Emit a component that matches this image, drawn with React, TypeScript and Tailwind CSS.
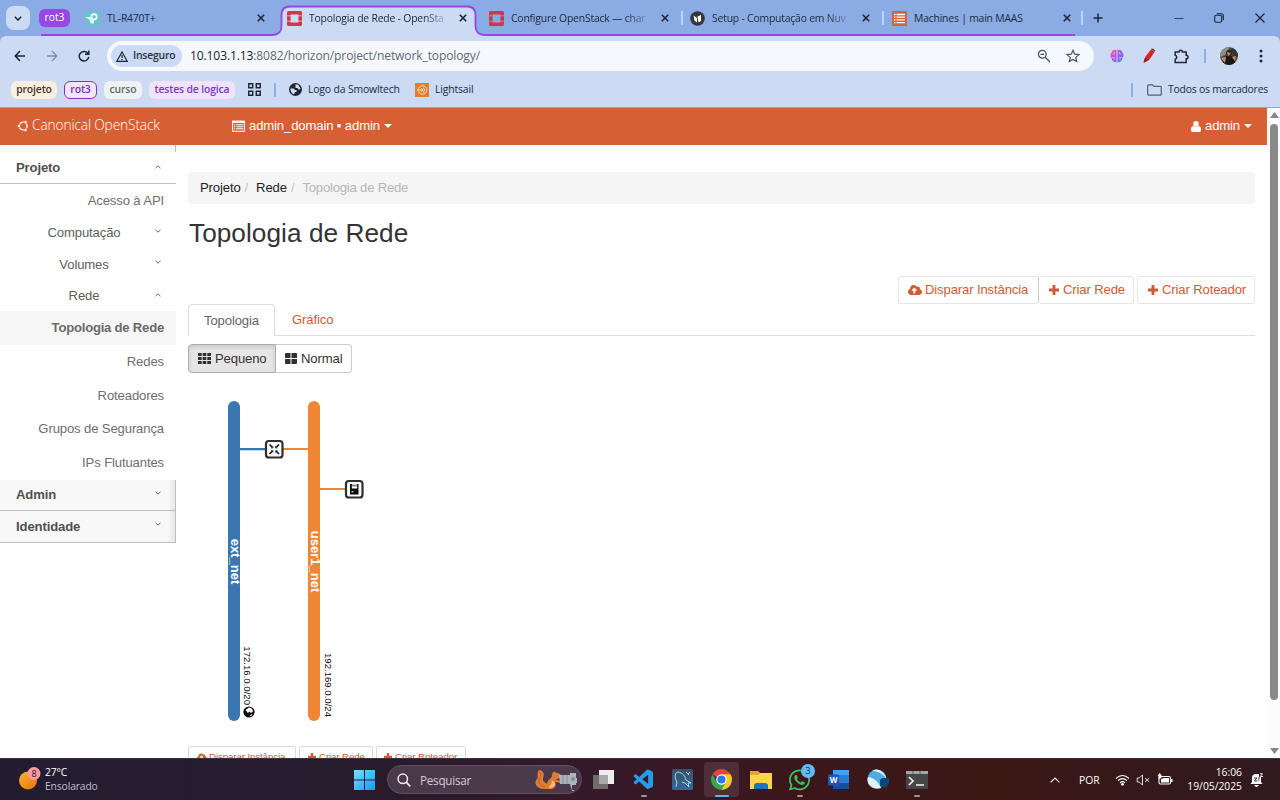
import type { ReactNode } from "react";
import { FaCloudUploadAlt, FaWhatsapp } from "react-icons/fa";
import { VscVscode } from "react-icons/vsc";

const ui = "font-['Open_Sans','Noto_Sans',sans-serif]";

function Close() {
  return (
    <svg className="block h-[8px] w-[8px] shrink-0" viewBox="0 0 8 8">
      <path d="M.8 .8 7.2 7.2M7.2 .8 .8 7.2" stroke="#20242c" strokeWidth="1.6" />
    </svg>
  );
}

function Plus({ className }: { className: string }) {
  return (
    <svg className={`shrink-0 ${className}`} viewBox="0 0 10 10">
      <path d="M5 0V10M0 5H10" stroke="currentColor" strokeWidth="2.900" />
    </svg>
  );
}

function Caret({ className }: { className: string }) {
  return (
    <svg className={`h-[4px] w-[8px] shrink-0 ${className}`} viewBox="0 0 8 4">
      <path d="M0 0H8L4 4Z" fill="currentColor" />
    </svg>
  );
}

function OpenStackMark() {
  return (
    <svg className="block h-[15px] w-[15px]" viewBox="0 0 15 15">
      <path
        fillRule="evenodd"
        fill="#d0374a"
        d="M1.5 0h12a1.5 1.5 0 0 1 1.5 1.5V4.6h-3.6V3.5H3.6v1.1H0V1.5A1.5 1.5 0 0 1 1.5 0ZM0 5.3h3.6v4.4H0ZM11.4 5.3H15v4.4h-3.6ZM0 10.4h3.6v1.1h7.8v-1.1H15v3.1a1.5 1.5 0 0 1-1.5 1.5h-12A1.5 1.5 0 0 1 0 13.5Z"
      />
    </svg>
  );
}

function Tab({ width, icon, title, fade }: { width: string; icon: ReactNode; title: string; fade?: boolean }) {
  return (
    <div className={`flex h-[36px] shrink-0 items-center pr-[10px] ${width}`}>
      <span className="w-[22px] shrink-0">{icon}</span>
      <span
        className={`min-w-0 flex-1 whitespace-nowrap text-[10.400px] leading-[18px] tracking-[-0.200px] text-[#202a3c] ${
          fade ? "mr-[8px] [mask-image:linear-gradient(to_right,black_80%,transparent)]" : ""
        }`}
      >
        {title}
      </span>
      <Close />
    </div>
  );
}

function TabStrip() {
  return (
    <div className="relative flex h-[36px] items-center bg-[#8aabe4]">
      <svg className="absolute left-0 top-0 h-[36px] w-[1280px]" viewBox="0 0 1280 36">
        <path d="M272 36Q281.500 36 281.500 26V15Q281.500 6.500 290 6.500H467Q475.500 6.500 475.500 15V26Q475.500 36 486 36Z" fill="#ccdaf4" />
        <path
          d="M41 35H272Q281.500 35 281.500 26V15Q281.500 6.500 290 6.500H467Q475.500 6.500 475.500 15V26Q475.500 35 485 35H1075"
          fill="none"
          stroke="#9747e4"
          strokeWidth="1.8"
        />
      </svg>
      <div className="relative flex w-full items-center">
        <div className="ml-[6px] flex h-[24px] w-[24px] items-center justify-center rounded-[8px] bg-[#ccdaf4]">
          <svg className="h-[5px] w-[8px]" viewBox="0 0 8 5">
            <path d="M.8 .8 4 4 7.200 .8" fill="none" stroke="#1c2330" strokeWidth="1.5" />
          </svg>
        </div>
        <div className="ml-[9px] mr-[15px] flex h-[18px] w-[31px] items-center justify-center rounded-[6px] bg-[#9747e4] text-[10.300px] text-white">rot3</div>
        <Tab
          width="w-[190px]"
          title="TL-R470T+"
          icon={
            <svg className="block h-[15px] w-[15px]" viewBox="0 0 15 15">
              <rect width="15" height="15" rx="1" fill="#68c3cf" />
              <path d="M3 6.800H6.500V5.600A2.600 2.600 0 1 1 9 8.400H7.800V11.700A2 2 0 0 1 5.700 9.500V8.400Z" fill="none" stroke="#fff" strokeWidth="1.700" />
            </svg>
          }
        />
        <div className="w-[12px]" />
        <Tab width="w-[190px]" title="Topologia de Rede - OpenSta" fade icon={<OpenStackMark />} />
        <div className="w-[12px]" />
        <Tab width="w-[190px]" title="Configure OpenStack — char" fade icon={<OpenStackMark />} />
        <div className="ml-[2px] mr-[7px] h-[14px] w-[2px] shrink-0 bg-[#bfd2f3]" />
        <Tab
          width="w-[190px]"
          title="Setup - Computação em Nuv"
          fade
          icon={
            <svg className="block h-[15px] w-[15px]" viewBox="0 0 15 15">
              <circle cx="7.500" cy="7.500" r="7.300" fill="#34383d" />
              <path d="M3.500 4.500 7 7V11.500L4.500 9.500ZM7.500 5.500 11 4V10L8.500 11.500Z" fill="#fff" />
            </svg>
          }
        />
        <div className="ml-[2px] mr-[8px] h-[14px] w-[2px] shrink-0 bg-[#bfd2f3]" />
        <Tab
          width="w-[189px]"
          title="Machines | main MAAS"
          icon={
            <svg className="block h-[15px] w-[15px]" viewBox="0 0 15 15">
              <rect width="15" height="15" fill="#dc6136" />
              <path d="M4.500 3.500H13M4.500 6.200H13M4.500 8.900H13M4.500 11.600H13M2 3.500H3.500M2 6.200H3.500M2 8.900H3.500M2 11.600H3.500" stroke="#fff" strokeWidth="1.300" />
            </svg>
          }
        />
        <div className="h-[14px] w-[2px] shrink-0 bg-[#bfd2f3]" />
        <svg className="ml-[10px] h-[10px] w-[10px]" viewBox="0 0 10 10">
          <path d="M5 .5V9.500M.5 5H9.500" stroke="#1c2330" strokeWidth="1.500" />
        </svg>
        <svg className="ml-auto h-[10px] w-[10px]" viewBox="0 0 10 10">
          <path d="M.5 5.500H9.500" stroke="#35405a" />
        </svg>
        <svg className="ml-[30px] h-[10px] w-[10px]" viewBox="0 0 10 10">
          <rect x=".7" y="2.300" width="7" height="7" rx="1.500" fill="none" stroke="#1c2330" strokeWidth="1.100" />
          <path d="M2.800 .8H7.300Q9.300 .8 9.300 2.800V7.300" fill="none" stroke="#1c2330" strokeWidth="1.100" />
        </svg>
        <svg className="ml-[31px] mr-[15px] h-[10px] w-[10px]" viewBox="0 0 10 10">
          <path d="M.5 .5 9.500 9.500M9.500 .5 .5 9.500" stroke="#1c2330" strokeWidth="1.200" />
        </svg>
      </div>
    </div>
  );
}

function Toolbar() {
  return (
    <div className="bg-[#8aabe4]">
      <div className="flex h-[40px] items-center rounded-t-[6px] bg-[#ccdaf4]">
        <svg className="ml-[14px] h-[12px] w-[12px]" viewBox="0 0 12 12">
          <path d="M11 6H1.500M6 1 1.200 6 6 11" fill="none" stroke="#1f2736" strokeWidth="1.500" />
        </svg>
        <svg className="ml-[20px] h-[12px] w-[12px]" viewBox="0 0 12 12">
          <path d="M1 6H10.500M6 1 10.800 6 6 11" fill="none" stroke="#8390aa" strokeWidth="1.400" />
        </svg>
        <svg className="ml-[20px] h-[12px] w-[12px]" viewBox="0 0 12 12">
          <path d="M10.200 3.800A4.800 4.800 0 1 0 10.800 6.800M10.800 .5V4.300H7" fill="none" stroke="#1f2736" strokeWidth="1.500" />
        </svg>
        <div className="ml-[17px] flex h-[30px] w-[987px] items-center rounded-full bg-[#f5f9fd] pl-[4px]">
          <div className="flex h-[22px] w-[71px] items-center rounded-full bg-[#ccdaf4] pl-[5px]">
            <svg className="mr-[5px] h-[11px] w-[12px] shrink-0" viewBox="0 0 12 11">
              <path d="M6 1 11.200 10.300H.8Z" fill="none" stroke="#1f2736" strokeWidth="1.200" />
              <path d="M6 4V7M6 8V9.200" stroke="#1f2736" strokeWidth="1.200" />
            </svg>
            <span className="whitespace-nowrap text-[10.400px] font-semibold tracking-[-0.200px] text-[#28303e]">Inseguro</span>
          </div>
          <div className="ml-[8px] flex-1 whitespace-nowrap text-[12.100px] tracking-[-0.140px] text-[#636975]">
            <span className="text-[#1c2026]">10.103.1.13</span>:8082/horizon/project/network_topology/
          </div>
          <svg className="h-[14px] w-[14px]" viewBox="0 0 14 14">
            <circle cx="5.300" cy="5.300" r="3.900" fill="none" stroke="#4c5360" strokeWidth="1.300" />
            <path d="M8.200 8.200 13 13M3.500 5.300H7.100" stroke="#4c5360" strokeWidth="1.300" />
          </svg>
          <svg className="ml-[15px] mr-[14px] h-[14px] w-[14px]" viewBox="0 0 14 14">
            <path d="M7 1.300 8.700 5.200 13 5.600 9.800 8.400 10.700 12.600 7 10.400 3.300 12.600 4.200 8.400 1 5.600 5.300 5.200Z" fill="none" stroke="#4c5360" strokeWidth="1.200" />
          </svg>
        </div>
        <svg className="ml-[16px] h-[14px] w-[14px]" viewBox="0 0 14 14">
          <defs>
            <linearGradient id="brain" x1="0" x2="1" y1="0" y2="1">
              <stop offset="0" stopColor="#ff5f8f" />
              <stop offset=".5" stopColor="#a655ea" />
              <stop offset="1" stopColor="#3f8df5" />
            </linearGradient>
          </defs>
          <path d="M6.500 .8C3.500 .3 1.800 1.700 1.700 3.400 0 4.600 .1 8.400 1.700 9.500 2 12 4 13.700 6.500 13.200ZM7.500 .8C10.500 .3 12.200 1.700 12.300 3.400 14 4.600 13.900 8.400 12.300 9.500 12 12 10 13.700 7.500 13.200Z" fill="url(#brain)" />
          <path d="M2.500 5H4.500V3M1.500 8.500H5M4 11V9M11.500 5H9.500V3M12.500 8.500H9M10 11V9" fill="none" stroke="#d9d9fb" strokeWidth=".6" />
        </svg>
        <svg className="ml-[18px] h-[16px] w-[14px]" viewBox="0 0 14 16">
          <path d="M9 1.500 12.800 3.500 7.500 11.500 3.200 9Z" fill="#d52422" />
          <path d="M3.200 9 7.500 11.500 4.500 13.500 1.500 15 2 12Z" fill="#a5191b" />
          <path d="M9.500 .8 13 2.800" stroke="#5b2228" strokeWidth="1.300" />
        </svg>
        <svg className="ml-[18px] h-[15px] w-[15px]" viewBox="0 0 15 15">
          <path d="M1.200 3H5A1.700 1.700 0 0 1 8.400 3H12.200V6.200A1.800 1.800 0 0 1 12.200 9.800V13.500H1.200V10.200A2 2 0 0 0 1.200 6.300Z" fill="none" stroke="#1f2736" strokeWidth="1.500" />
        </svg>
        <div className="ml-[15px] h-[14px] w-[2px] bg-[#8db0ed]" />
        <svg className="ml-[14px] h-[18px] w-[18px]" viewBox="0 0 18 18">
          <clipPath id="avatar"><circle cx="9" cy="9" r="9" /></clipPath>
          <g clipPath="url(#avatar)">
            <rect width="18" height="18" fill="#55473a" />
            <path d="M0 0H10L5 8 0 10Z" fill="#88908b" />
            <path d="M11 2 18 0V9L14 12Z" fill="#30343c" />
            <circle cx="9" cy="6" r="3" fill="#30211a" />
            <path d="M3 11 8 8 13 10 16 18H3Z" fill="#1c1815" />
            <path d="M7 5 11 6 8 9.500ZM1 11 6 10 5 16ZM12 10 16 9 15 14Z" fill="#bc8e6c" />
          </g>
        </svg>
        <svg className="ml-[21px] h-[14px] w-[4px]" viewBox="0 0 4 14">
          <circle cx="2" cy="2" r="1.500" fill="#1f2736" /><circle cx="2" cy="7" r="1.500" fill="#1f2736" /><circle cx="2" cy="12" r="1.500" fill="#1f2736" />
        </svg>
      </div>
      <div className="flex h-[32px] items-center border-b border-[#98a3bd] bg-[#ccdaf4] pb-[4px] text-[10.400px] tracking-[-0.150px] text-[#202a3c]">
        <div className="ml-[11px] flex h-[18px] w-[46px] items-center justify-center rounded-[6px] bg-[#fbeddf] font-semibold text-[#40362f]">projeto</div>
        <div className="ml-[7px] flex h-[18px] w-[33px] items-center justify-center rounded-[6px] border border-[#7b38c5] bg-[#f1e4fc] font-semibold text-[#7433bc]">rot3</div>
        <div className="ml-[7px] flex h-[18px] w-[38px] items-center justify-center rounded-[6px] bg-[#eff2f2] font-semibold text-[#626a6d]">curso</div>
        <div className="ml-[7px] flex h-[18px] w-[86px] items-center justify-center whitespace-nowrap rounded-[6px] bg-[#f0e3fc] font-semibold text-[#7b39c4]">testes de logica</div>
        <svg className="ml-[13px] h-[13px] w-[13px]" viewBox="0 0 13 13">
          <path d="M.8 .8H4.700V4.700H.8ZM8.300 .8H12.200V4.700H8.300ZM.8 8.300H4.700V12.200H.8ZM8.300 8.300H12.200V12.200H8.300Z" fill="none" stroke="#1f2736" strokeWidth="1.500" />
        </svg>
        <div className="ml-[13px] h-[14px] w-[2px] bg-[#8db0ed]" />
        <svg className="ml-[13px] h-[13px] w-[13px]" viewBox="0 0 13 13">
          <circle cx="6.500" cy="6.500" r="6.500" fill="#1f2736" />
          <path d="M1.500 5.500H4.500L6 7H7.500V9H6L5 11.500C2.500 10.500 1.300 8 1.500 5.500ZM6.500 1.500H9L11.500 5.500 10 7 8.500 5H6.500Z" fill="#d4def2" />
        </svg>
        <span className="ml-[6px] w-[94px] whitespace-nowrap">Logo da Smowltech</span>
        <svg className="ml-[13px] h-[14px] w-[14px]" viewBox="0 0 14 14">
          <rect width="14" height="14" fill="#e17d2c" />
          <circle cx="7.500" cy="7" r="4.300" fill="none" stroke="#fbe5cf" strokeWidth=".9" />
          <path d="M2 7H8M6 5 8 7 6 9M8.500 4.500Q10.500 7 8.500 9.500" fill="none" stroke="#fbe5cf" strokeWidth=".9" />
        </svg>
        <span className="ml-[6px]">Lightsail</span>
        <div className="ml-auto h-[14px] w-[2px] bg-[#8db0ed]" />
        <svg className="ml-[14px] h-[12px] w-[15px]" viewBox="0 0 15 12">
          <path d="M.7 10.200V1.800Q.7 .8 1.700 .8H5.500L7 2.400H13.300Q14.300 2.400 14.300 3.400V10.200Q14.300 11.200 13.300 11.200H1.700Q.7 11.200 .7 10.200Z" fill="none" stroke="#566071" strokeWidth="1.200" />
        </svg>
        <span className="ml-[6px] mr-[12px] w-[100px] whitespace-nowrap tracking-[-0.220px]">Todos os marcadores</span>
      </div>
    </div>
  );
}

function Chevron({ up }: { up?: boolean }) {
  return (
    <svg className="block h-[4px] w-[6px]" viewBox="0 0 6 4">
      <path d={up ? "M.5 3.200 3 .8 5.500 3.200" : "M.5 .8 3 3.200 5.500 .8"} fill="none" stroke="#505050" strokeWidth=".9" />
    </svg>
  );
}

function Section({ label, up, top }: { label: string; up?: boolean; top?: boolean }) {
  return (
    <div
      className={`flex items-center justify-between border-b border-[#bdbdbd] pl-[16px] font-bold text-[#505050] ${
        top ? "h-[32px] bg-white pr-[15px]" : "h-[31.500px] bg-[linear-gradient(to_right,#f8f8f8_96%,#e6e6e6)] pr-[14px]"
      }`}
    >
      {label}
      <span className={top ? "pb-[2px]" : "pb-[4px]"}><Chevron up={up} /></span>
    </div>
  );
}

function Group({ label, up }: { label: string; up?: boolean }) {
  return (
    <div className="flex h-[31.200px] items-center text-[#5d5d5d]">
      <span className="w-[155px] pl-[13px] text-center">{label}</span>
      <span className={up ? "pb-[2px]" : "pb-[4px]"}><Chevron up={up} /></span>
    </div>
  );
}

function Item({ label, active }: { label: string; active?: boolean }) {
  return (
    <div className={`flex h-[33.700px] items-center justify-end pr-[12px] ${active ? "bg-[#f6f6f6] font-bold tracking-[-0.220px] text-[#6a6a6a]" : "text-[#6e6e6e]"}`}>
      {label}
    </div>
  );
}

function Sidebar() {
  return (
    <aside className="w-[176px] shrink-0 whitespace-nowrap">
      <div className="h-[7px] border-r border-[#bbb] bg-[#f8f8f8]" />
      <Section label="Projeto" up top />
      <Item label="Acesso à API" />
      <Group label="Computação" />
      <Group label="Volumes" />
      <Group label="Rede" up />
      <Item label="Topologia de Rede" active />
      <Item label="Redes" />
      <Item label="Roteadores" />
      <Item label="Grupos de Segurança" />
      <Item label="IPs Flutuantes" />
      <div className="border-r border-[#bdbdbd]">
        <Section label="Admin" />
        <Section label="Identidade" />
      </div>
    </aside>
  );
}

function Topology() {
  return (
    <svg className="block h-[373px] w-[300px] font-['Liberation_Sans',Arial,sans-serif] tracking-normal" viewBox="188 373 300 373">
      <path d="M240 449H266" stroke="#3c76b0" strokeWidth="2" />
      <path d="M240 450.500H266" stroke="#a9d0f4" strokeWidth=".8" />
      <path d="M283 449H308M320 489H346" stroke="#ee8636" strokeWidth="2.200" />
      <rect x="228" y="401" width="12" height="320" rx="6" fill="#3c76b0" />
      <rect x="308" y="401" width="12" height="320" rx="6" fill="#ee8636" />
      <clipPath id="bars"><path d="M228 401H240V721H228ZM308 401H320V721H308Z" /></clipPath>
      <g clipPath="url(#bars)" fill="#fff" fontSize="13" fontWeight="700" textAnchor="middle">
        <text transform="translate(230.500 561.500) rotate(90)">ext_net</text>
        <text transform="translate(310.500 561.500) rotate(90)">user1_net</text>
      </g>
      <g fill="#0c0c0c" fontSize="9.600" textAnchor="end">
        <text transform="translate(244.300 705) rotate(90)">172.16.0.0/20</text>
        <text transform="translate(324.500 717) rotate(90)">192.169.0.0/24</text>
      </g>
      <circle cx="249" cy="712" r="5.600" fill="#0c0c0c" />
      <path d="M245.500 710 249 707.500 252 708.500 253 711.500 251 713 249.500 711.500 248 713ZM250 715 252.500 714 251 716.500Z" fill="#fff" />
      <g fill="#fff" stroke="#2f2f2f" strokeWidth="2.200">
        <rect x="266" y="441" width="16.500" height="16.500" rx="2.800" />
        <rect x="346" y="481" width="16.500" height="16.500" rx="2.800" />
      </g>
      <g stroke="#161616" strokeWidth="1.700" fill="none">
        <path d="M269.500 444.500 272.500 447.500M279 444.500 276 447.500M269.500 454 272.500 451M279 454 276 451" />
        <path d="M271 448H273V446M277.500 448H275.500V446M271 450.500H273V452.500M277.500 450.500H275.500V452.500" strokeWidth=".6" />
      </g>
      <path d="M350 484H358.500V494.500H350Z" fill="#0c0c0c" />
      <path d="M351.800 484.300H357.200V485.500H351.800ZM351.800 486.300H357.200V488.500H351.800ZM351.500 491.300H353.500V492.300H351.500Z" fill="#fff" />
    </svg>
  );
}

function Page() {
  return (
    <div className="flex h-[650px] overflow-hidden bg-white font-['Liberation_Sans',Arial,sans-serif] text-[13.100px] tracking-[-0.130px]">
      <div className="min-w-0 flex-1">
        <header className="flex h-[37px] items-center bg-[#d75f34] pb-[1px] text-white">
          <svg className="ml-[17px] h-[12px] w-[12px]" viewBox="0 0 12 12">
            <circle cx="6.200" cy="6" r="3.900" fill="none" stroke="#fff" strokeWidth="1.400" />
            <g fill="#fff" stroke="#d75f34" strokeWidth=".7">
              <circle cx="1.800" cy="6" r="1.600" /><circle cx="8.500" cy="2" r="1.600" /><circle cx="8.500" cy="10" r="1.600" />
            </g>
          </svg>
          <span className="ml-[3px] w-[200px] whitespace-nowrap pb-[2px] font-['Open_Sans',sans-serif] text-[13.800px] font-light tracking-[-0.170px]">Canonical OpenStack</span>
          <svg className="h-[12px] w-[13px]" viewBox="0 0 13 12">
            <path d="M.6 1.200H12.400V11.200H.6Z" fill="none" stroke="#fff" strokeWidth="1.100" />
            <path d="M.5 .7H12.500V3H.5ZM2 4.300H3.300V5.300H2ZM2 6.300H3.300V7.300H2ZM2 8.300H3.300V9.300H2ZM4.300 4.300H11V5.300H4.300ZM4.300 6.300H11V7.300H4.300ZM4.300 8.300H11V9.300H4.300Z" fill="#fff" />
          </svg>
          <span className="ml-[4px] whitespace-nowrap">admin_domain ▪ admin</span>
          <Caret className="ml-[4px]" />
          <svg className="ml-auto h-[11px] w-[10px]" viewBox="0 0 10 11">
            <circle cx="5" cy="2.900" r="2.800" fill="#fff" />
            <path d="M0 9V7.500Q.2 5 2.300 5 5 7 7.700 5 9.800 5 10 7.500V9Q10 11 8.500 11H1.500Q0 11 0 9Z" fill="#fff" />
          </svg>
          <span className="ml-[4px]">admin</span>
          <Caret className="ml-[4px] mr-[15px]" />
        </header>
        <div className="flex">
          <Sidebar />
          <main className="min-w-0 flex-1 whitespace-nowrap pl-[12px] pr-[12px] pt-[27px]">
            <nav className="flex h-[32px] items-center rounded-[4px] bg-[#f5f5f5] pl-[12px] text-[#222]">
              Projeto<span className="ml-[4px] mr-[8px] text-[#c4c4c4]">/</span>
              Rede<span className="ml-[4px] mr-[8px] text-[#c4c4c4]">/</span>
              <span className="tracking-[-0.200px] text-[#b5b5b5]">Topologia de Rede</span>
            </nav>
            <h1 className="ml-[1px] mt-[13px] h-[32px] text-[26.200px] leading-[32px] tracking-[0.050px] text-[#333]">Topologia de Rede</h1>
            <div className="mt-[27px] flex h-[28px] justify-end text-[#cf5a33]">
              <button className="flex w-[141px] items-center rounded-[3px] border border-[#e6e6e6] border-r-[#ccc] pl-[9px]">
                <FaCloudUploadAlt className="mr-[3px] h-[14px] w-[14px]" />Disparar Instância
              </button>
              <button className="flex w-[95px] items-center rounded-[3px] border border-l-0 border-[#e6e6e6] pl-[10px]">
                <Plus className="mr-[4px] h-[10px] w-[10px]" />Criar Rede
              </button>
              <button className="ml-[3px] flex w-[118px] items-center rounded-[3px] border border-[#e6e6e6] pl-[10px]">
                <Plus className="mr-[4px] h-[10px] w-[10px]" />Criar Roteador
              </button>
            </div>
            <div className="flex h-[32px] items-end border-b border-[#ddd]">
              <div className="-mb-px flex h-[32px] w-[87px] items-center justify-center rounded-t-[4px] border border-b-0 border-[#ddd] bg-white text-[#666]">Topologia</div>
              <div className="ml-[17px] flex h-[31px] items-center text-[#cf5a33]">Gráfico</div>
            </div>
            <div className="mt-[8px] flex h-[29px] text-[#333]">
              <button className="flex w-[88px] items-center rounded-l-[4px] border border-[#adadad] bg-[#e5e5e5] pl-[9px] shadow-[inset_0_2px_4px_rgba(0,0,0,0.13)]">
                <svg className="mr-[4px] h-[11px] w-[13px]" viewBox="0 0 13 11">
                  <path d="M0 0H3.700V3H0ZM4.700 0H8.300V3H4.700ZM9.300 0H13V3H9.300ZM0 4H3.700V7H0ZM4.700 4H8.300V7H4.700ZM9.300 4H13V7H9.300ZM0 8H3.700V11H0ZM4.700 8H8.300V11H4.700ZM9.300 8H13V11H9.300Z" fill="#303030" />
                </svg>
                Pequeno
              </button>
              <button className="flex w-[76px] items-center rounded-r-[4px] border border-l-0 border-[#ccc] pl-[9px]">
                <svg className="mr-[4px] h-[11px] w-[12px]" viewBox="0 0 12 11">
                  <path d="M0 1Q0 0 1 0H5.500V5H0ZM6.500 0H11Q12 0 12 1V5H6.500ZM0 6H5.500V11H1Q0 11 0 10ZM6.500 6H12V10Q12 11 11 11H6.500Z" fill="#303030" />
                </svg>
                Normal
              </button>
            </div>
            <Topology />
            <div className="flex gap-[3px] text-[9.800px] tracking-[-0.150px] text-[#cf5a33]">
              <button className="flex h-[22px] w-[108px] items-center rounded-[3px] border border-[#d8d8d8] pl-[8px]"><FaCloudUploadAlt className="mr-[2px] h-[10px] w-[10px]" />Disparar Instância</button>
              <button className="flex h-[22px] w-[74px] items-center rounded-[3px] border border-[#d8d8d8] pl-[8px]"><Plus className="mr-[3px] h-[8px] w-[8px]" />Criar Rede</button>
              <button className="flex h-[22px] w-[90px] items-center rounded-[3px] border border-[#d8d8d8] pl-[7px]"><Plus className="mr-[3px] h-[8px] w-[8px]" />Criar Roteador</button>
            </div>
          </main>
        </div>
      </div>
      <div className="flex w-[13px] flex-col items-center bg-[#fcfcfc]">
        <svg className="ml-[1px] mt-[4px] h-[6px] w-[9px] shrink-0" viewBox="0 0 9 6"><path d="M4.500 0 9 6H0Z" fill="#868686" /></svg>
        <div className="ml-[1px] mt-[6px] h-[576px] w-[8px] rounded-full bg-[#898989]" />
        <svg className="mb-[4px] ml-[1px] mt-auto h-[6px] w-[9px] shrink-0" viewBox="0 0 9 6"><path d="M0 0H9L4.500 6Z" fill="#868686" /></svg>
      </div>
    </div>
  );
}

function AppSlot({ children, open, active }: { children: ReactNode; open?: boolean; active?: boolean }) {
  return (
    <div className={`relative flex h-[35px] w-[35px] shrink-0 items-center justify-center rounded-[4px] ${active ? "bg-white/10" : ""}`}>
      {children}
      {(open || active) && <span className={`absolute bottom-0 h-[2px] rounded-full ${active ? "w-[14px] bg-[#5ab8f0]" : "w-[6px] bg-[#a59398]"}`} />}
    </div>
  );
}

function Taskbar() {
  return (
    <footer className="flex h-[42px] items-center border-t border-[#40303c] bg-[linear-gradient(to_right,#231c30,#281b2e_30%,#35192a_46%,#3b171c_62%,#3b1714_78%,#301a20)] text-[10.300px] leading-[14px] text-white">
      <svg className="ml-[18px] h-[26px] w-[24px]" viewBox="0 0 24 26">
        <defs><linearGradient id="sun" x2="1" y2="1"><stop stopColor="#f6b82f" /><stop offset="1" stopColor="#f06d14" /></linearGradient></defs>
        <circle cx="10" cy="13.500" r="9" fill="url(#sun)" />
        <circle cx="16" cy="6.500" r="6.500" fill="#ff9aa3" />
        <text x="16" y="9.800" fontSize="9" textAnchor="middle" fill="#2a1720">8</text>
      </svg>
      <div className="ml-[3px] w-[309px] -translate-y-px tracking-[-0.120px]">
        <div>27°C</div>
        <div className="text-[#c4bdc9]">Ensolarado</div>
      </div>
      <svg className="h-[20px] w-[21px]" viewBox="0 0 21 20">
        <defs><linearGradient id="win" x2="1" y2="1"><stop stopColor="#80dcff" /><stop offset="1" stopColor="#0c9cf4" /></linearGradient></defs>
        <path d="M0 0H10V9.500H0ZM11 0H21V9.500H11ZM0 10.500H10V20H0ZM11 10.500H21V20H11Z" fill="url(#win)" />
      </svg>
      <div className="ml-[12px] flex h-[29px] w-[195px] items-center rounded-full border border-[#62505f] bg-[#4a394a] pl-[9px]">
        <svg className="h-[14px] w-[14px]" viewBox="0 0 14 14"><circle cx="5.800" cy="5.800" r="4.700" fill="none" stroke="#eee" strokeWidth="1.500" /><path d="M9.200 9.200 13.300 13.300" stroke="#eee" strokeWidth="1.700" /></svg>
        <span className="ml-[9px] text-[11.700px] tracking-[-0.250px] text-[#d3cbd3]">Pesquisar</span>
        <svg className="ml-auto mr-[3px] h-[22px] w-[44px]" viewBox="0 0 44 22">
          <path d="M10 20C3 20-1 14 3 10 5 8 2 4 5 1 9 1 11 5 9 9 8 12 11 13 13 15 13 11 17 10 18 7 17 4 20 4 20 2L22 4C25 3 27 6 28 8 26 10 23 9 22 11L27 12V14L21 13C23 17 20 21 15 20Z" fill="#de7b38" />
          <path d="M14 18C17 17 18 14 18 11L21 14C22 17 18 19 16 19Z" fill="#f2bb81" />
          <path d="M5 3C8 6 6 9 5 11 4 14 8 17 11 18" fill="none" stroke="#bb5b27" strokeWidth="1" />
          <path d="M25 6H36V4H42V9H43V14H42V16H38V21H40V22H38L36 15H26Z" fill="#aeb4bc" />
          <path d="M29 6V15M33 6V15" stroke="#858b94" strokeWidth="1" /><circle cx="39" cy="10" r="2" fill="#858c95" />
        </svg>
      </div>
      <div className="ml-[5px] flex items-center gap-[4px]">
        <AppSlot>
          <svg className="h-[21px] w-[21px] -translate-x-px" viewBox="0 0 21 21"><path d="M6 1H21V15H6Z" fill="#eeeced" /><path d="M0 6H15V20H0Z" fill="#706c6c" /><path d="M6 6H15V15H6Z" fill="#aaa7a8" /></svg>
        </AppSlot>
        <AppSlot open><VscVscode className="h-[24px] w-[24px] text-[#239de9]" /></AppSlot>
        <AppSlot>
          <svg className="h-[21px] w-[21px]" viewBox="0 0 21 21"><defs><linearGradient id="sql" x2="0" y2="1"><stop stopColor="#38526a" /><stop offset="1" stopColor="#2b6d97" /></linearGradient></defs><rect width="21" height="21" rx="1.500" fill="url(#sql)" /><path d="M4 18 5 13C2 9 3 3 6 3 11 4 13 7 14 11L19 14 16 14 17 18 13 14 10 13M14 3 17 6M18 3 16 5" fill="none" stroke="#cedce6" strokeWidth=".9" /></svg>
        </AppSlot>
        <AppSlot active>
          <svg className="h-[21px] w-[21px]" viewBox="0 0 22 22">
            <path d="M11 11 1.500 5.500A11 11 0 0 1 20.500 5.500Z" fill="#e5453b" />
            <path d="M11 11 11 5.500H20.500A11 11 0 0 1 11 22Z" fill="#fbc926" />
            <path d="M11 11 15.800 13.700 11 22A11 11 0 0 1 1.500 5.500L6.200 13.700Z" fill="#35a653" />
            <circle cx="11" cy="11" r="5.500" fill="#fff" /><circle cx="11" cy="11" r="4.300" fill="#2f78e8" />
          </svg>
        </AppSlot>
        <AppSlot>
          <svg className="h-[20px] w-[22px]" viewBox="0 0 22 20"><path d="M0 1H8L10 3H22V19H0Z" fill="#e5a51f" /><path d="M0 5H8L10 3H22V19H0Z" fill="#ffd34f" /><path d="M4 19V16Q4 13 7 13H15Q18 13 18 16V19Z" fill="#1678b9" /></svg>
        </AppSlot>
        <AppSlot open>
          <FaWhatsapp className="h-[24px] w-[23px] text-[#38c45c]" />
          <span className="absolute right-[2px] top-[2px] flex h-[14px] w-[14px] items-center justify-center rounded-full bg-[#5fbdf4] text-[9.500px] text-[#142c40]">3</span>
        </AppSlot>
        <AppSlot>
          <svg className="h-[19px] w-[21px]" viewBox="0 0 21 19"><rect x="5" width="16" height="19" rx="1" fill="#2b7cd4" /><path d="M5 0H21V5H5Z" fill="#41a3ee" /><path d="M5 13H21V19H5Z" fill="#164f9f" /><rect y="4.500" width="11" height="11" rx="1" fill="#1958b8" /><text x="5.500" y="13" textAnchor="middle" fontSize="8" fontWeight="700" fill="#fff">W</text></svg>
        </AppSlot>
        <AppSlot>
          <svg className="h-[21px] w-[22px]" viewBox="0 0 22 21"><circle cx="10" cy="10" r="9.500" fill="#4dabdf" /><path d="M1 8C6 8 11 12 14 19 7 21 0 17 .5 10ZM5 2C12 2 17 6 19.500 10 18 4 12-1 7 1Z" fill="#dff1f8" /><path d="M13 11 15 9H22V15L18 19 13 17Z" fill="#0a477b" /></svg>
        </AppSlot>
        <AppSlot open>
          <svg className="h-[18px] w-[22px]" viewBox="0 0 22 18"><rect width="22" height="18" rx="1" fill="#464646" /><path d="M0 0H22V3H0Z" fill="#a6a6a6" /><path d="M7 0V3M14 0V3" stroke="#626262" /><path d="M3 6 7 10 3 14M10 14H18" fill="none" stroke="#f3f3f3" strokeWidth="1.700" /></svg>
        </AppSlot>
      </div>
      <svg className="ml-auto h-[6px] w-[10px]" viewBox="0 0 10 6"><path d="M.6 5.400 5 1 9.400 5.400" fill="none" stroke="#fff" strokeWidth="1.200" /></svg>
      <span className="ml-[19px] w-[22px]">POR</span>
      <svg className="ml-[14px] h-[12px] w-[15px]" viewBox="0 0 14 12"><path d="M.5 4.500Q7-1.500 13.500 4.500M2.500 6.700Q7 2.500 11.500 6.700M4.500 8.800Q7 6.500 9.500 8.800" fill="none" stroke="#fff" strokeWidth="1.100" /><circle cx="7" cy="10.300" r="1.400" fill="#fff" /></svg>
      <svg className="ml-[6px] h-[12px] w-[15px]" viewBox="0 0 14 12"><path d="M.7 4H2.700L6 1V11L2.700 8H.7ZM8.500 4 12.700 8M12.700 4 8.500 8" fill="none" stroke="#ddd" strokeWidth="1" /></svg>
      <svg className="ml-[6px] h-[13px] w-[16px]" viewBox="0 0 15 13"><rect x="1.500" y="3.500" width="11.500" height="7.500" rx="1.500" fill="none" stroke="#fff" strokeWidth="1.100" /><path d="M3.500 6 7 5H11.500V9.500H3.500ZM13.500 6H15V9H13.500ZM2 0 4 2V5L1 6V3H0Z" fill="#fff" /></svg>
      <div className="ml-[9px] w-[60px] -translate-y-px whitespace-nowrap text-right"><div>16:06</div><div>19/05/2025</div></div>
      <svg className="ml-[8px] mr-[17px] h-[14px] w-[13px]" viewBox="0 0 13 14"><path d="M2 9V5Q2 1 6 1H9V4H11V9L12.500 11H.5ZM4 12H9L7 14H6Z" fill="#fff" /><path d="M4 5H7L4.500 8H7.500M8 5H10M8 7H9.500" fill="none" stroke="#321a20" strokeWidth=".9" /><path d="M10 .7H12.500L10.300 3.500H13" fill="none" stroke="#fff" strokeWidth=".9" /></svg>
    </footer>
  );
}

export default function App() {
  return (
    <div className={`h-[800px] w-[1280px] overflow-hidden ${ui}`}>
      <TabStrip />
      <Toolbar />
      <Page />
      <Taskbar />
    </div>
  );
}
